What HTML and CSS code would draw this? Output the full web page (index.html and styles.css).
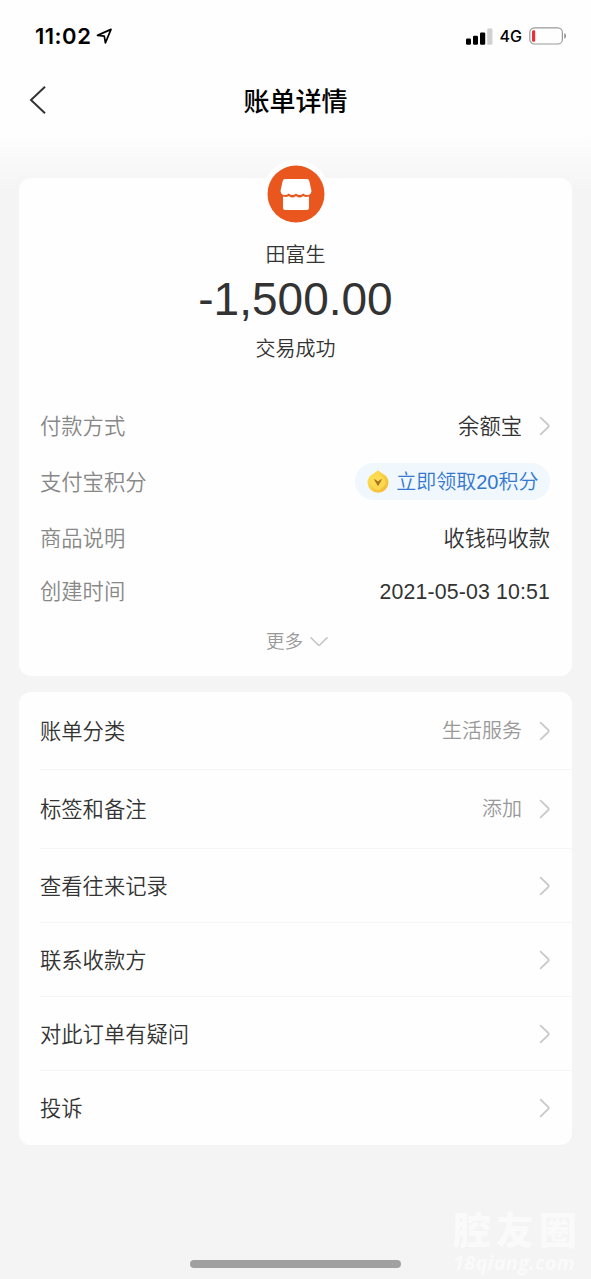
FILE: index.html
```html
<!DOCTYPE html>
<html lang="zh-CN">
<head>
<meta charset="utf-8">
<title>账单详情</title>
<link rel="stylesheet" href="styles.css">
</head>
<body>
<svg class="defs" width="0" height="0">
  <symbol id="chevron" viewBox="0 0 12 20"><path d="M1.6 1.7 L9.3 9 Q10.3 10 9.3 11 L1.6 18.3" fill="none" stroke="#c9c9c9" stroke-width="1.8" stroke-linecap="round"/></symbol>
</svg>
<div class="screen">
  <header class="status">
    <div class="status-left">
      <span class="time">11:02</span>
      <svg class="locate" width="17" height="17" viewBox="0 0 17 17"><path d="M1.5 7.4 L15 1.4 L9.4 14.8 L8.3 8.2 Z" fill="none" stroke="#000" stroke-width="1.7" stroke-linejoin="round"/></svg>
    </div>
    <div class="status-right">
      <svg width="27" height="17" viewBox="0 0 27 17"><rect x="0" y="10.5" width="5" height="6.3" rx="1.2"/><rect x="7" y="7.8" width="5" height="9" rx="1.2"/><rect x="14" y="4.4" width="5.2" height="12.4" rx="1.2"/><rect x="21.2" y="0.6" width="5.2" height="16.2" rx="1.2" fill="#d0d0d0"/></svg>
      <span class="network">4G</span>
      <svg class="battery" width="38" height="18" viewBox="0 0 38 18"><rect x=".8" y=".8" width="32.6" height="16.2" rx="4.6" fill="none" stroke="#999" stroke-width="1.2"/><rect x="3" y="3.2" width="3.2" height="11.6" rx="1.4" fill="#e53238"/><path d="M35.2 6 Q37.2 6.8 37.2 8.9 Q37.2 11 35.2 11.8 Z" fill="#999"/></svg>
    </div>
  </header>
  <nav class="nav">
    <svg class="back" width="20" height="30" viewBox="0 0 20 30"><path d="M17 1.7 L3 15 L17 28.3" fill="none" stroke="#333" stroke-width="2"/></svg>
    <h1 class="title">账单详情</h1>
  </nav>
  <main class="content">
    <section class="card bill">
      <svg class="avatar" width="68" height="68" viewBox="0 0 68 68">
        <circle cx="34" cy="34" r="34" fill="#fff"/><circle cx="34" cy="34" r="28.5" fill="#e9571e"/>
        <path d="M23.2 19 H44.8 Q46.8 19 47.3 21 L49.4 30.2 Q49.8 34.8 45.2 35 Q43 35 41.2 33.4 Q37.6 36.7 34 33.4 Q30.4 36.7 26.8 33.4 Q25 35 22.8 35 Q18.2 34.8 18.6 30.2 L20.7 21 Q21.2 19 23.2 19 Z" fill="#fff"/>
        <path d="M21 36.6 Q24.6 37.5 26.8 35.9 Q30.4 39.1 34 35.9 Q37.6 39.1 41.2 35.9 Q43.4 37.5 47 36.6 V47.8 Q47 50 44.8 50 H23.2 Q21 50 21 47.8 Z" fill="#fff"/>
      </svg>
      <div class="payee">田富生</div>
      <div class="amount">-1,500.00</div>
      <div class="result">交易成功</div>
      <div class="details">
        <div class="detail"><span class="label">付款方式</span><span class="value">余额宝<svg class="arrow" width="12" height="20"><use href="#chevron"/></svg></span></div>
        <div class="detail"><span class="label">支付宝积分</span>
          <span class="points">
            <svg width="22" height="24" viewBox="0 0 22 24"><defs><linearGradient id="gold" x1="0" y1="0" x2="1" y2="1"><stop offset="0" stop-color="#ffe65a"/><stop offset="1" stop-color="#f3b62f"/></linearGradient></defs><path d="M11 .6 Q12 .6 13 1.8 L17.4 4.8 Q21.5 7.8 21.5 12.4 A10.5 10.3 0 0 1 .5 12.4 Q.5 7.8 4.6 4.8 L9 1.8 Q10 .6 11 .6 Z" fill="url(#gold)"/><path d="M11 4 L16.5 8 Q19 10 18.7 13 Q18.2 16.4 11 20.6 Q3.8 16.4 3.3 13 Q3 10 5.5 8 Z" fill="#ffe15a" opacity=".65"/><path d="M7.6 9.6 L11 15.4 L14.4 9.6 L11 12 Z" fill="#a9741b" stroke="#a9741b" stroke-width="1" stroke-linejoin="round"/></svg>
            立即领取20积分
          </span>
        </div>
        <div class="detail"><span class="label">商品说明</span><span class="value">收钱码收款</span></div>
        <div class="detail short"><span class="label">创建时间</span><span class="value date">2021-05-03 10:51</span></div>
      </div>
      <div class="more">更多<svg width="18" height="12" viewBox="0 0 18 12"><path d="M1 1.8 L8 8.8 Q9 9.8 10 8.8 L17 1.8" fill="none" stroke="#c4c4c4" stroke-width="1.6" stroke-linecap="round"/></svg></div>
    </section>
    <section class="card menu">
      <div class="row tall">账单分类<span class="hint">生活服务<svg class="arrow" width="12" height="20"><use href="#chevron"/></svg></span></div>
      <div class="row taller">标签和备注<span class="hint">添加<svg class="arrow" width="12" height="20"><use href="#chevron"/></svg></span></div>
      <div class="row">查看往来记录<svg class="arrow" width="12" height="20"><use href="#chevron"/></svg></div>
      <div class="row">联系收款方<svg class="arrow" width="12" height="20"><use href="#chevron"/></svg></div>
      <div class="row">对此订单有疑问<svg class="arrow" width="12" height="20"><use href="#chevron"/></svg></div>
      <div class="row">投诉<svg class="arrow" width="12" height="20"><use href="#chevron"/></svg></div>
    </section>
  </main>
  <div class="home-bar"></div>
  <div class="watermark"><div class="mark-name">腔友圈</div><div class="mark-site">18qiang.com</div></div>
</div>
</body>
</html>
```
FILE: styles.css
```css
* { box-sizing: border-box; }
body { margin: 0; font-family: "Liberation Sans", "Noto Sans CJK SC", sans-serif; font-weight: 350; color: #333; }
svg { display: block; flex: none; }
.defs { position: absolute; }
.screen {
  position: relative;
  display: flex;
  flex-direction: column;
  width: 591px;
  height: 1279px;
  overflow: hidden;
  background: linear-gradient(#fefefe 0, #fefefe 132px, #f4f4f4 192px);
}
.status { display: flex; justify-content: space-between; height: 72px; padding: 0 24px 0 35px; color: #000; }
.status-left, .status-right { display: flex; align-items: center; }
.time { font: 600 22px/72px Inter, sans-serif; letter-spacing: .5px; }
.locate { margin-left: 5px; }
.network { margin: 0 7px 0 7px; font: 500 16px/72px Inter, sans-serif; }
.nav { display: grid; grid-template-columns: 60px 1fr 60px; align-items: center; height: 56px; }
.back { margin-left: 28px; }
.title { margin: 0; padding-top: 3px; color: #000; font-size: 26px; font-weight: 500; line-height: 40px; text-align: center; }
.content { display: flex; flex-direction: column; gap: 16px; padding: 50px 19px 0; }
.card { border-radius: 12px; background: #fefefe; }
.bill { display: flex; flex-direction: column; align-items: center; height: 498px; }
.avatar { margin: -18px 0 0; }
.payee { margin-top: 12px; font-size: 20px; line-height: 30px; }
.amount { height: 60px; font-size: 46px; line-height: 59px; }
.result { margin-top: 4px; font-size: 20px; line-height: 30px; }
.details { width: 100%; margin-top: 35px; padding: 0 22px 0 21px; }
.detail { display: flex; align-items: center; justify-content: space-between; height: 56px; font-size: 21.3px; line-height: 32px; }
.short { height: 49px; }
.label { color: #888; }
.value, .hint { display: flex; align-items: center; }
.hint { color: #999; font-size: 20px; }
.arrow { margin: 0 -1px 0 17px; }
.value .arrow { margin-bottom: 2px; }
.points { display: flex; align-items: center; gap: 7px; height: 37px; margin-bottom: 3px; padding: 0 11.5px 0 12px; border-radius: 19px; background: #f0f7fd; color: #3478cf; font-size: 20px; }
.date { letter-spacing: .15px; }
.more { display: flex; align-items: center; gap: 7px; margin-top: 12px; padding-left: 3px; color: #999; font-size: 18.5px; line-height: 28px; }
.menu { overflow: hidden; padding-left: 21px; }
.row { display: flex; align-items: center; justify-content: space-between; height: 74px; padding: 0 22px 3px 0; border-bottom: 1px solid #f5f5f5; font-size: 21.3px; }
.row .arrow { margin-top: 3px; }
.tall { height: 78px; }
.taller { height: 79px; }
.row:last-child { border-bottom: 0; }
.home-bar { position: absolute; left: 190px; bottom: 11px; width: 211px; height: 8px; border-radius: 4px; background: #a0a0a0; }
.watermark { position: absolute; left: 453px; top: 1210px; color: #fafafa; white-space: nowrap; }
.mark-name { font-size: 38px; font-weight: 900; line-height: 42px; letter-spacing: 5px; }
.mark-site { font: italic 700 20px/22px "Open Sans", sans-serif; letter-spacing: .2px; }
```
